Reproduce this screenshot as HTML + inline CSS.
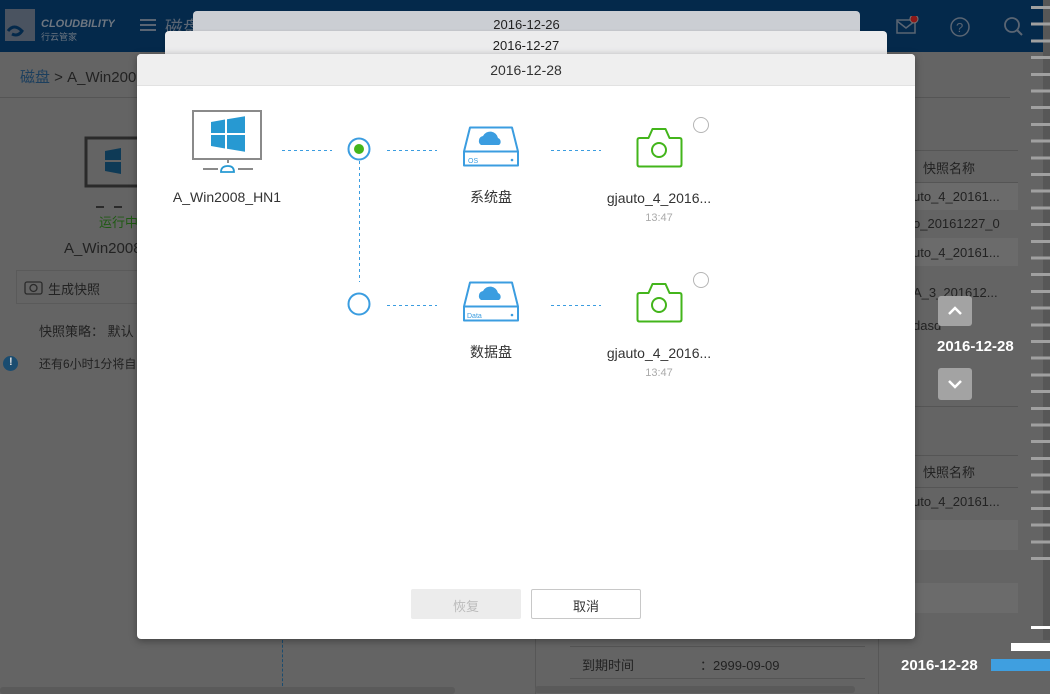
<!DOCTYPE html>
<html><head><meta charset="utf-8"><style>
*{margin:0;padding:0;box-sizing:border-box}
body{width:1050px;height:694px;overflow:hidden;background:#646464;font-family:"Liberation Sans","Noto Sans CJK SC",sans-serif;position:relative;color:#222}
.a{position:absolute}
.hdr{left:0;top:0;width:1050px;height:52px;background:#04294b}
.t{position:absolute;white-space:nowrap}
</style></head><body>
<div class="a hdr"></div>
<!-- logo -->
<svg class="a" style="left:5px;top:9px" width="110" height="36"><rect x="0" y="0" width="30" height="32" fill="#4a5360"/><path d="M3 22 q6 -8 14 0 q-4 6 -10 3" stroke="#04294b" stroke-width="3" fill="none"/><text x="36" y="18" font-size="11" font-style="italic" font-weight="bold" fill="#6e7680" font-family="Liberation Sans">CLOUDBILITY</text><text x="36" y="31" font-size="9" fill="#6e7680">行云管家</text></svg>
<div class="a" style="left:140px;top:19px;width:16px;height:2px;background:#5a6573;box-shadow:0 5px 0 #5a6573,0 10px 0 #5a6573"></div>
<div class="t" style="left:165px;top:14px;font-size:18px;color:#5a6573">磁盘</div>
<svg class="a" style="left:896px;top:16px" width="130" height="22"><rect x="1" y="4" width="18" height="13" fill="none" stroke="#5a6573" stroke-width="1.5"/><path d="M1 5 l9 7 l9 -7" stroke="#5a6573" fill="none" stroke-width="1.5"/><circle cx="18" cy="3" r="4" fill="#8b1818" stroke="#777"/><circle cx="64" cy="11" r="9" fill="none" stroke="#5a6573" stroke-width="1.5"/><text x="60" y="16" font-size="13" fill="#5a6573">?</text><circle cx="116" cy="9" r="7" fill="none" stroke="#5a6573" stroke-width="1.8"/><path d="M121 14 l5 5" stroke="#5a6573" stroke-width="2"/></svg>
<!-- breadcrumb -->
<div class="t" style="left:20px;top:66px;font-size:15px;color:#1c3f5e">磁盘 <span style="color:#222">&gt; A_Win2008</span></div>
<div class="a" style="left:0;top:97px;width:1010px;height:1px;background:#555"></div>
<!-- left panel underlay -->
<svg class="a" style="left:84px;top:136px" width="60" height="72"><rect x="2" y="2" width="56" height="48" fill="none" stroke="#2a2a2a" stroke-width="3"/><path d="M21 15 l16 -3 v12 h-16z M21 26 h16 v12 l-16 -3z" fill="#0e3a56"/><path d="M12 71 h8 M30 71 h8" stroke="#2a2a2a" stroke-width="2"/></svg>
<div class="t" style="left:99px;top:212px;font-size:13px;color:#1f5a13">运行中</div>
<div class="t" style="left:64px;top:240px;font-size:15px;color:#222">A_Win2008</div>
<div class="a" style="left:16px;top:270px;width:122px;height:34px;border:1px solid #5a5a5a"></div>
<div class="t" style="left:48px;top:279px;font-size:13px;color:#222">生成快照</div>
<svg class="a" style="left:24px;top:278px" width="20" height="18"><rect x="1" y="4" width="17" height="12" rx="2" fill="none" stroke="#2a2a2a" stroke-width="1.3"/><circle cx="9.5" cy="10" r="3.5" fill="none" stroke="#2a2a2a" stroke-width="1.3"/></svg>
<div class="t" style="left:39px;top:321px;font-size:13px;color:#222">快照策略：  默认</div>
<div class="a" style="left:3px;top:356px;width:15px;height:15px;border-radius:50%;background:#1a4c70"></div>
<div class="t" style="left:9px;top:356px;font-size:11px;color:#ddd;font-weight:bold">!</div>
<div class="t" style="left:39px;top:355px;font-size:12px;color:#222">还有6小时1分将自</div>
<div class="a" style="left:282px;top:640px;height:46px;border-left:1px dashed #1a4c70"></div>
<div class="a" style="left:0;top:687px;width:455px;height:7px;background:#5a5a5a;border-radius:3px"></div>
<!-- right table underlay -->
<div class="a" style="left:535px;top:98px;width:1px;height:596px;background:#575757"></div>
<div class="a" style="left:878px;top:98px;width:1px;height:596px;background:#575757"></div>
<div class="a" style="left:878px;top:150px;width:140px;height:1px;background:#555"></div>
<div class="t" style="left:923px;top:158px;font-size:13px;color:#222">快照名称</div>
<div class="a" style="left:878px;top:182px;width:140px;height:1px;background:#555"></div>
<div class="a" style="left:878px;top:183px;width:140px;height:27px;background:#6b6b6b"></div>
<div class="t" style="left:913px;top:189px;font-size:13px;color:#222">uto_4_20161...</div>
<div class="t" style="left:913px;top:216px;font-size:13px;color:#222">o_20161227_0</div>
<div class="a" style="left:878px;top:238px;width:140px;height:28px;background:#6b6b6b"></div>
<div class="t" style="left:913px;top:245px;font-size:13px;color:#222">uto_4_20161...</div>
<div class="t" style="left:913px;top:285px;font-size:13px;color:#222">A_3_201612...</div>
<div class="t" style="left:913px;top:318px;font-size:13px;color:#222">dasd</div>
<div class="a" style="left:878px;top:406px;width:140px;height:1px;background:#555"></div>
<div class="a" style="left:878px;top:455px;width:140px;height:1px;background:#555"></div>
<div class="t" style="left:923px;top:462px;font-size:13px;color:#222">快照名称</div>
<div class="a" style="left:878px;top:487px;width:140px;height:1px;background:#555"></div>
<div class="t" style="left:913px;top:494px;font-size:13px;color:#222">uto_4_20161...</div>
<div class="a" style="left:878px;top:520px;width:140px;height:30px;background:#6b6b6b"></div>
<div class="a" style="left:878px;top:583px;width:140px;height:30px;background:#6b6b6b"></div>
<div class="a" style="left:570px;top:646px;width:295px;height:1px;background:#555"></div>
<div class="t" style="left:582px;top:655px;font-size:13px;color:#222">到期时间</div>
<div class="t" style="left:700px;top:655px;font-size:13px;color:#222">：2999-09-09</div>
<div class="a" style="left:570px;top:678px;width:295px;height:1px;background:#555"></div>
<div class="a" style="left:535px;top:686px;width:320px;height:7px;background:#5a5a5a;border-radius:3px"></div>
<!-- timeline -->
<div class="a" style="left:938px;top:296px;width:34px;height:30px;background:#a3a3a3;border-radius:3px"></div>
<svg class="a" style="left:946px;top:305px" width="18" height="12"><path d="M3 9 l6 -6 l6 6" stroke="#fff" stroke-width="2.5" fill="none"/></svg>
<div class="t" style="left:937px;top:338px;font-size:15px;color:#fff;font-weight:bold">2016-12-28</div>
<div class="a" style="left:938px;top:368px;width:34px;height:32px;background:#a3a3a3;border-radius:3px"></div>
<svg class="a" style="left:946px;top:378px" width="18" height="12"><path d="M3 3 l6 6 l6 -6" stroke="#fff" stroke-width="2.5" fill="none"/></svg>
<div class="t" style="left:901px;top:657px;font-size:15px;color:#fff;font-weight:bold">2016-12-28</div>
<div class="a" style="left:991px;top:659px;width:59px;height:12px;background:#3f9fe0"></div>
<div class="a" style="left:1011px;top:643px;width:39px;height:8px;background:#fff"></div>
<div class="a" style="left:1043px;top:0;width:7px;height:640px;background:#575757"></div>
<div class="a" style="left:1031px;top:6px;width:19px;height:560px;background:repeating-linear-gradient(to bottom,#a0a0a0 0,#a0a0a0 3px,transparent 3px,transparent 16.7px)"></div>
<div class="a" style="left:1031px;top:626px;width:19px;height:3px;background:#fff"></div>
<!-- stacked dialogs -->
<div class="a" style="left:193px;top:11px;width:667px;height:44px;background:#cbced3;border-radius:4px"></div>
<div class="t" style="left:193px;top:17px;width:667px;text-align:center;font-size:13px;color:#222">2016-12-26</div>
<div class="a" style="left:165px;top:31px;width:722px;height:30px;background:#ececed;border-radius:4px;box-shadow:0 1px 3px rgba(0,0,0,.2)"></div>
<div class="t" style="left:165px;top:38px;width:722px;text-align:center;font-size:13px;color:#222">2016-12-27</div>
<div class="a" style="left:137px;top:54px;width:778px;height:585px;background:#fff;border-radius:4px;box-shadow:0 2px 8px rgba(0,0,0,.35);overflow:hidden">
 <div class="a" style="left:0;top:0;width:778px;height:32px;background:#efefef;border-bottom:1px solid #e2e2e2"></div>
 <div class="t" style="left:0;top:8px;width:778px;text-align:center;font-size:14px;color:#333">2016-12-28</div>
</div>
<svg class="a" style="left:137px;top:86px" width="778" height="320" font-family="Liberation Sans, Noto Sans CJK SC, sans-serif">
 <g transform="translate(-137,-86)">
  <rect x="193" y="111" width="68" height="48" fill="none" stroke="#8a8a8a" stroke-width="2"/>
  <path d="M211 122 l14 -2.5 v13.5 h-14z M227 119.3 l18 -3 v16.7 h-18z M211 135 h14 v13.5 l-14 -2.5z M227 135 h18 v16.7 l-18 -3z" fill="#2799d2"/>
  <path d="M203 169 h15 M238 169 h15 M228 159 v4" stroke="#8a8a8a" stroke-width="2"/>
  <path d="M221 172 q0 -6 7 -6 q6 0 6 6 z" fill="none" stroke="#2799d2" stroke-width="1.8"/>
  <text x="227" y="202" font-size="14" text-anchor="middle" fill="#333">A_Win2008_HN1</text>
  <g stroke="#3b9de0" stroke-width="1" stroke-dasharray="3,3" fill="none">
   <path d="M282 150.5 h50 M387 150.5 h50 M551 150.5 h50 M387 305.5 h50 M551 305.5 h50 M359.5 161 v121"/>
  </g>
  <circle cx="359" cy="149" r="10.5" fill="none" stroke="#3b9de0" stroke-width="2"/>
  <circle cx="359" cy="149" r="5" fill="#43b51b"/>
  <circle cx="359" cy="304" r="10.5" fill="none" stroke="#3b9de0" stroke-width="2"/>
  <g id="d1">
   <path d="M470 127.5 h42 l6 24 v14 h-54 v-14z M464 151.5 h54" fill="none" stroke="#3b9de0" stroke-width="2" stroke-linejoin="round"/>
   <path d="M481 145 a5 5 0 0 1 2 -9 a8 8 0 0 1 15 2 a4 4 0 0 1 1 7z" fill="#3b9de0"/>
   <circle cx="512" cy="160" r="1.3" fill="#3b9de0"/>
  </g>
  <text x="468" y="163" font-size="7" fill="#3b9de0">OS</text>
  <use href="#d1" transform="translate(0,155)"/>
  <text x="467" y="318" font-size="7" fill="#3b9de0">Data</text>
  <text x="491" y="202" font-size="14" text-anchor="middle" fill="#333">系统盘</text>
  <text x="491" y="357" font-size="14" text-anchor="middle" fill="#333">数据盘</text>
  <g id="c1">
   <path d="M637.5 140 q0 -2 2 -2 h9 l4 -9 h13 l4 9 h10 q2 0 2 2 v24.5 q0 2 -2 2 h-40 q-2 0 -2 -2z" fill="none" stroke="#43b51b" stroke-width="2" stroke-linejoin="round"/>
   <circle cx="659" cy="150" r="7" fill="none" stroke="#43b51b" stroke-width="2"/>
   <circle cx="701" cy="125" r="7.5" fill="none" stroke="#b5b5b5" stroke-width="1"/>
  </g>
  <use href="#c1" transform="translate(0,155)"/>
  <text x="659" y="203" font-size="14" text-anchor="middle" fill="#333">gjauto_4_2016...</text>
  <text x="659" y="221" font-size="11" text-anchor="middle" fill="#aaa">13:47</text>
  <text x="659" y="358" font-size="14" text-anchor="middle" fill="#333">gjauto_4_2016...</text>
  <text x="659" y="376" font-size="11" text-anchor="middle" fill="#aaa">13:47</text>
 </g>
</svg>
<div class="a" style="left:411px;top:589px;width:110px;height:30px;background:#ececec;border-radius:2px"></div>
<div class="t" style="left:411px;top:596px;width:110px;text-align:center;font-size:13px;color:#bbb">恢复</div>
<div class="a" style="left:531px;top:589px;width:110px;height:30px;border:1px solid #c8c8c8;border-radius:2px;background:#fff"></div>
<div class="t" style="left:531px;top:596px;width:110px;text-align:center;font-size:13px;color:#333">取消</div>
</body></html>
